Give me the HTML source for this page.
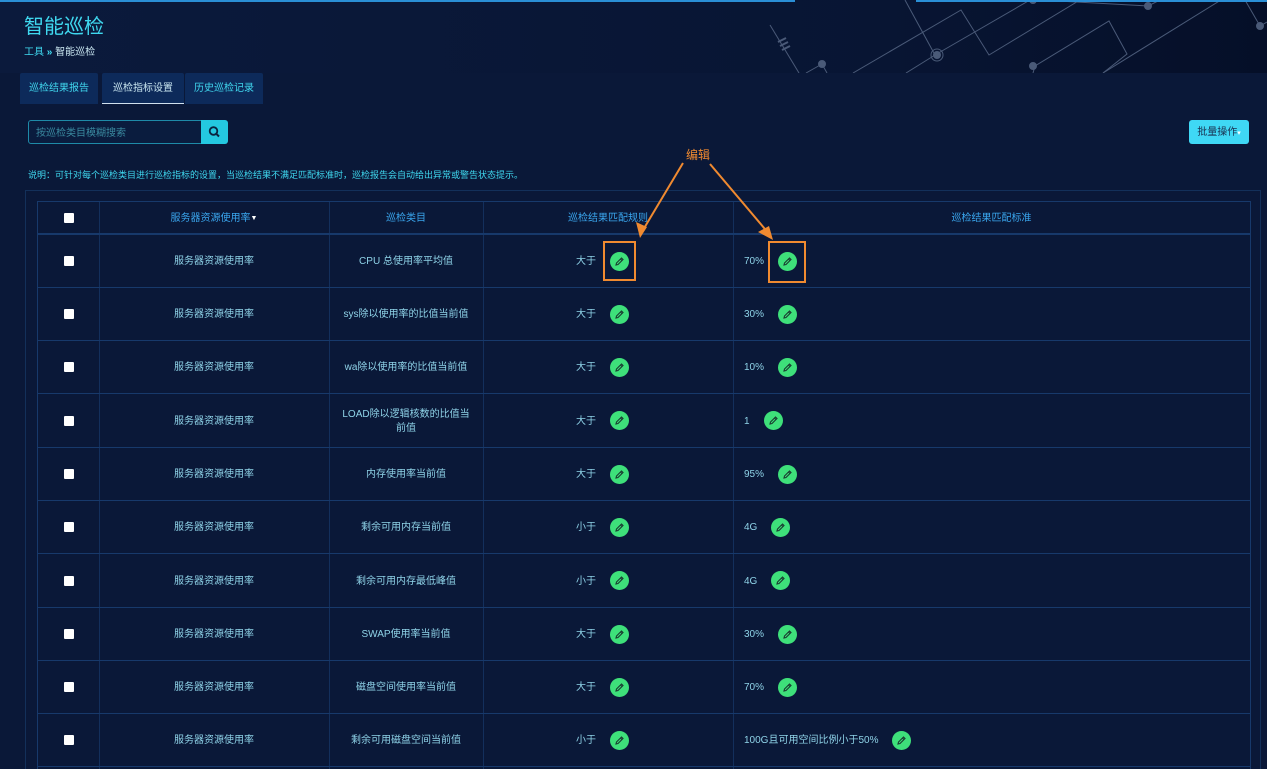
<!DOCTYPE html>
<html><head><meta charset="utf-8"><style>
*{margin:0;padding:0;box-sizing:border-box}
body{width:1267px;height:769px;overflow:hidden;background:#0a1838;font-family:"Liberation Sans","Noto Sans CJK SC",sans-serif;position:relative;color:#8fd3e8}
.hdr{position:absolute;left:0;top:0;width:1267px;height:73px;background:linear-gradient(90deg,#0b1a3c,#081533 70%,#050f28);}
.topline{position:absolute;top:0;height:2px;background:#2a8fd6}
.t{position:absolute;white-space:nowrap}
.tab{position:absolute;top:73px;height:31px;background:#0d2a5a;color:#40d6ee;font-size:10px;line-height:31px;text-align:center;border-radius:2px 2px 0 0}
.tbl{position:absolute;left:37px;top:201px;width:1214px;height:568px;border-left:1px solid #17396b;border-right:1px solid #17396b;border-top:1px solid #17396b}
.row{position:absolute;left:0;width:1212px;height:53px;border-bottom:1px solid #17396b;font-size:10px;color:#8fd3e8}
.vl{position:absolute;top:0;bottom:0;width:1px;background:#132f5c}
.c{position:absolute;top:0;height:100%;display:flex;align-items:center;justify-content:center;text-align:center;line-height:14px}
.c1,.c2,.c3,.c4{padding-top:2px}
.c0{left:0;width:61px}.c1{left:61px;width:230px}.c2{left:291px;width:154px}
.c3{left:538px;width:80px;justify-content:flex-start}.c4{left:706px;width:400px;justify-content:flex-start}
.cb{width:10px;height:10px;background:#fff;border-radius:1px}
.ed{display:inline-block;width:19px;height:19px;border-radius:50%;background:#3ee07a;position:relative;margin-left:14px;flex:none;top:-1px}
.ed svg{position:absolute;left:4px;top:4px}
</style></head><body>
<div class="hdr">
<svg width="1267" height="73" style="position:absolute;left:0;top:0" stroke="#4a5a78" fill="none" stroke-width="1">
<path d="M770 25 L799 73"/><path d="M778 42 l8 -4 M780 46 l8 -4 M782 50 l8 -4" stroke-width="2"/>
<path d="M806 73 L822 64 L827 73"/>
<path d="M853 73 L961 10 L989 55 L1080 0"/>
<path d="M905 0 L935 55 L906 73"/>
<path d="M935 55 L1030 0"/>
<path d="M1033 73 L1035 66 L1109 21 L1127 54 L1103 73"/>
<path d="M1103 73 L1221 0"/>
<path d="M1040 0 L1148 6 L1160 0"/>
<path d="M1245 0 L1260 26 L1267 22"/>
<circle cx="937" cy="55" r="6"/><circle cx="937" cy="55" r="3.5" fill="#4a5a78"/>
<circle cx="822" cy="64" r="3.5" fill="#4a5a78"/><circle cx="1033" cy="66" r="3.5" fill="#4a5a78"/>
<circle cx="1148" cy="6" r="3.5" fill="#4a5a78"/><circle cx="1260" cy="26" r="3.5" fill="#4a5a78"/><circle cx="1033" cy="0" r="3.5" fill="#4a5a78"/>
</svg>
</div>
<div class="topline" style="left:0;width:795px"></div>
<div class="topline" style="left:916px;width:351px"></div>
<div class="t" style="left:24px;top:10px;font-size:20px;color:#3fd8ef">智能巡检</div>
<div class="t" style="left:24px;top:43px;font-size:10px;color:#3fd8ef">工具 <b>»</b> <span style="color:#c9e6f0">智能巡检</span></div>
<div class="tab" style="left:20px;width:78px">巡检结果报告</div>
<div class="tab" style="left:102px;width:82px;color:#c9e6f0;border-bottom:1px solid #d0e0ee">巡检指标设置</div>
<div class="tab" style="left:185px;width:78px">历史巡检记录</div>
<div style="position:absolute;left:28px;top:120px;width:174px;height:24px;border:1px solid #1e8aa8;border-radius:3px 0 0 3px;background:#0a1c3e;font-size:10px;color:#3a8aa0;line-height:22px;padding-left:7px;padding-top:2px">按巡检类目模糊搜索</div>
<div style="position:absolute;left:201px;top:120px;width:27px;height:24px;background:#24c8e0;border-radius:0 3px 3px 0">
<svg width="27" height="24"><circle cx="12.5" cy="11" r="3.8" stroke="#0a2440" stroke-width="1.8" fill="none"/><path d="M15.3 13.8 L18 16.5" stroke="#0a2440" stroke-width="2"/></svg></div>
<div style="position:absolute;left:1189px;top:120px;width:60px;height:24px;background:#3fd8f5;border-radius:3px;font-size:10px;color:#1a3050;line-height:22px;padding-top:2px;text-align:center">批量操作<span style="color:#fff;font-size:7px">▾</span></div>
<div class="t" style="left:28px;top:168px;font-size:9px;color:#3fd8ef">说明：可针对每个巡检类目进行巡检指标的设置，当巡检结果不满足匹配标准时，巡检报告会自动给出异常或警告状态提示。</div>
<div style="position:absolute;left:25px;top:190px;width:1236px;height:579px;border:1px solid #13305a;border-bottom:none"></div>
<div class="tbl">
<div class="vl" style="left:61px"></div><div class="vl" style="left:291px"></div><div class="vl" style="left:445px"></div><div class="vl" style="left:695px"></div>
<div class="row" style="top:0;height:33px;color:#3aa6ee;border-bottom:2px solid #17396b">
<div class="c c0"><div class="cb"></div></div>
<div class="c c1">服务器资源使用率<span style="color:#fff;font-size:7px">▼</span></div>
<div class="c c2">巡检类目</div>
<div class="c" style="left:445px;width:250px;padding-top:2px">巡检结果匹配规则</div>
<div class="c" style="left:695px;width:517px;padding-top:2px">巡检结果匹配标准</div>
</div>

<div class="row" style="top:33px"><div class="c c0"><div class="cb"></div></div><div class="c c1">服务器资源使用率</div><div class="c c2">CPU 总使用率平均值</div><div class="c c3">大于<span class="ed"><svg width="11" height="11" viewBox="0 0 11 11"><path d="M2 9 L2.5 7 L7.5 2 L9 3.5 L4 8.5 Z M6.5 3 L8 4.5" stroke="#1a3a30" stroke-width="1.1" fill="none"/></svg></span></div><div class="c c4">70%<span class="ed"><svg width="11" height="11" viewBox="0 0 11 11"><path d="M2 9 L2.5 7 L7.5 2 L9 3.5 L4 8.5 Z M6.5 3 L8 4.5" stroke="#1a3a30" stroke-width="1.1" fill="none"/></svg></span></div></div>

<div class="row" style="top:86px"><div class="c c0"><div class="cb"></div></div><div class="c c1">服务器资源使用率</div><div class="c c2">sys除以使用率的比值当前值</div><div class="c c3">大于<span class="ed"><svg width="11" height="11" viewBox="0 0 11 11"><path d="M2 9 L2.5 7 L7.5 2 L9 3.5 L4 8.5 Z M6.5 3 L8 4.5" stroke="#1a3a30" stroke-width="1.1" fill="none"/></svg></span></div><div class="c c4">30%<span class="ed"><svg width="11" height="11" viewBox="0 0 11 11"><path d="M2 9 L2.5 7 L7.5 2 L9 3.5 L4 8.5 Z M6.5 3 L8 4.5" stroke="#1a3a30" stroke-width="1.1" fill="none"/></svg></span></div></div>

<div class="row" style="top:139px"><div class="c c0"><div class="cb"></div></div><div class="c c1">服务器资源使用率</div><div class="c c2">wa除以使用率的比值当前值</div><div class="c c3">大于<span class="ed"><svg width="11" height="11" viewBox="0 0 11 11"><path d="M2 9 L2.5 7 L7.5 2 L9 3.5 L4 8.5 Z M6.5 3 L8 4.5" stroke="#1a3a30" stroke-width="1.1" fill="none"/></svg></span></div><div class="c c4">10%<span class="ed"><svg width="11" height="11" viewBox="0 0 11 11"><path d="M2 9 L2.5 7 L7.5 2 L9 3.5 L4 8.5 Z M6.5 3 L8 4.5" stroke="#1a3a30" stroke-width="1.1" fill="none"/></svg></span></div></div>

<div class="row" style="top:192px;height:54px"><div class="c c0"><div class="cb"></div></div><div class="c c1">服务器资源使用率</div><div class="c c2">LOAD除以逻辑核数的比值当<br>前值</div><div class="c c3">大于<span class="ed"><svg width="11" height="11" viewBox="0 0 11 11"><path d="M2 9 L2.5 7 L7.5 2 L9 3.5 L4 8.5 Z M6.5 3 L8 4.5" stroke="#1a3a30" stroke-width="1.1" fill="none"/></svg></span></div><div class="c c4">1<span class="ed"><svg width="11" height="11" viewBox="0 0 11 11"><path d="M2 9 L2.5 7 L7.5 2 L9 3.5 L4 8.5 Z M6.5 3 L8 4.5" stroke="#1a3a30" stroke-width="1.1" fill="none"/></svg></span></div></div>

<div class="row" style="top:246px"><div class="c c0"><div class="cb"></div></div><div class="c c1">服务器资源使用率</div><div class="c c2">内存使用率当前值</div><div class="c c3">大于<span class="ed"><svg width="11" height="11" viewBox="0 0 11 11"><path d="M2 9 L2.5 7 L7.5 2 L9 3.5 L4 8.5 Z M6.5 3 L8 4.5" stroke="#1a3a30" stroke-width="1.1" fill="none"/></svg></span></div><div class="c c4">95%<span class="ed"><svg width="11" height="11" viewBox="0 0 11 11"><path d="M2 9 L2.5 7 L7.5 2 L9 3.5 L4 8.5 Z M6.5 3 L8 4.5" stroke="#1a3a30" stroke-width="1.1" fill="none"/></svg></span></div></div>

<div class="row" style="top:299px"><div class="c c0"><div class="cb"></div></div><div class="c c1">服务器资源使用率</div><div class="c c2">剩余可用内存当前值</div><div class="c c3">小于<span class="ed"><svg width="11" height="11" viewBox="0 0 11 11"><path d="M2 9 L2.5 7 L7.5 2 L9 3.5 L4 8.5 Z M6.5 3 L8 4.5" stroke="#1a3a30" stroke-width="1.1" fill="none"/></svg></span></div><div class="c c4">4G<span class="ed"><svg width="11" height="11" viewBox="0 0 11 11"><path d="M2 9 L2.5 7 L7.5 2 L9 3.5 L4 8.5 Z M6.5 3 L8 4.5" stroke="#1a3a30" stroke-width="1.1" fill="none"/></svg></span></div></div>

<div class="row" style="top:352px;height:54px"><div class="c c0"><div class="cb"></div></div><div class="c c1">服务器资源使用率</div><div class="c c2">剩余可用内存最低峰值</div><div class="c c3">小于<span class="ed"><svg width="11" height="11" viewBox="0 0 11 11"><path d="M2 9 L2.5 7 L7.5 2 L9 3.5 L4 8.5 Z M6.5 3 L8 4.5" stroke="#1a3a30" stroke-width="1.1" fill="none"/></svg></span></div><div class="c c4">4G<span class="ed"><svg width="11" height="11" viewBox="0 0 11 11"><path d="M2 9 L2.5 7 L7.5 2 L9 3.5 L4 8.5 Z M6.5 3 L8 4.5" stroke="#1a3a30" stroke-width="1.1" fill="none"/></svg></span></div></div>

<div class="row" style="top:406px"><div class="c c0"><div class="cb"></div></div><div class="c c1">服务器资源使用率</div><div class="c c2">SWAP使用率当前值</div><div class="c c3">大于<span class="ed"><svg width="11" height="11" viewBox="0 0 11 11"><path d="M2 9 L2.5 7 L7.5 2 L9 3.5 L4 8.5 Z M6.5 3 L8 4.5" stroke="#1a3a30" stroke-width="1.1" fill="none"/></svg></span></div><div class="c c4">30%<span class="ed"><svg width="11" height="11" viewBox="0 0 11 11"><path d="M2 9 L2.5 7 L7.5 2 L9 3.5 L4 8.5 Z M6.5 3 L8 4.5" stroke="#1a3a30" stroke-width="1.1" fill="none"/></svg></span></div></div>

<div class="row" style="top:459px"><div class="c c0"><div class="cb"></div></div><div class="c c1">服务器资源使用率</div><div class="c c2">磁盘空间使用率当前值</div><div class="c c3">大于<span class="ed"><svg width="11" height="11" viewBox="0 0 11 11"><path d="M2 9 L2.5 7 L7.5 2 L9 3.5 L4 8.5 Z M6.5 3 L8 4.5" stroke="#1a3a30" stroke-width="1.1" fill="none"/></svg></span></div><div class="c c4">70%<span class="ed"><svg width="11" height="11" viewBox="0 0 11 11"><path d="M2 9 L2.5 7 L7.5 2 L9 3.5 L4 8.5 Z M6.5 3 L8 4.5" stroke="#1a3a30" stroke-width="1.1" fill="none"/></svg></span></div></div>

<div class="row" style="top:512px"><div class="c c0"><div class="cb"></div></div><div class="c c1">服务器资源使用率</div><div class="c c2">剩余可用磁盘空间当前值</div><div class="c c3">小于<span class="ed"><svg width="11" height="11" viewBox="0 0 11 11"><path d="M2 9 L2.5 7 L7.5 2 L9 3.5 L4 8.5 Z M6.5 3 L8 4.5" stroke="#1a3a30" stroke-width="1.1" fill="none"/></svg></span></div><div class="c c4">100G且可用空间比例小于50%<span class="ed"><svg width="11" height="11" viewBox="0 0 11 11"><path d="M2 9 L2.5 7 L7.5 2 L9 3.5 L4 8.5 Z M6.5 3 L8 4.5" stroke="#1a3a30" stroke-width="1.1" fill="none"/></svg></span></div></div>
</div>
<svg width="1267" height="769" style="position:absolute;left:0;top:0;pointer-events:none">
<rect x="604" y="242" width="31" height="38" fill="none" stroke="#f08a30" stroke-width="2"/>
<rect x="769" y="242" width="36" height="40" fill="none" stroke="#f08a30" stroke-width="2"/>
<path d="M683 163 L640 235" stroke="#f08a30" stroke-width="2"/><path d="M640 238 L636 222 L647 227 Z" fill="#f08a30"/>
<path d="M710 164 L770 235" stroke="#f08a30" stroke-width="2"/><path d="M773 240 L758 232 L769 226 Z" fill="#f08a30"/>
</svg>
<div class="t" style="left:686px;top:146px;font-size:12px;color:#f08a30">编辑</div>
</body></html>
